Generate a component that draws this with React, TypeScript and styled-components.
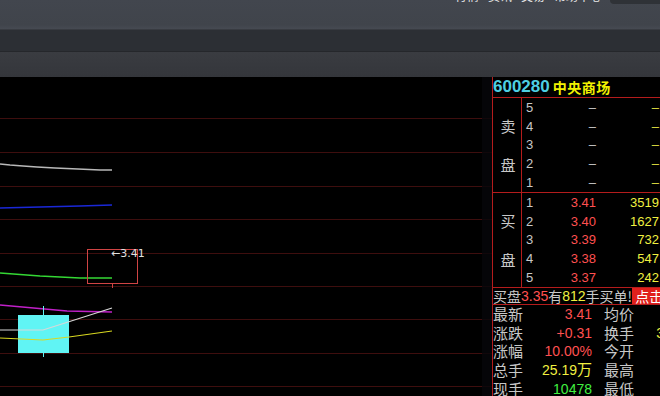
import React from 'react';
import styled, { createGlobalStyle } from 'styled-components';

const GlobalStyle = createGlobalStyle`
	html, body {
		margin: 0;
		padding: 0;
		background: #000;
		overflow: hidden;
	}
	* {
		box-sizing: border-box;
	}
`;

const RED_LINE = '#b41c1c';
const GRAY = '#c8c8c8';
const PRICE_RED = '#ff5050';
const VOL_YELLOW = '#f0f040';
const NUM_FONT = `'Liberation Sans', Arial, sans-serif`;
const CJK_FONT = `'Noto Sans CJK SC', sans-serif`;

const Page = styled.div`
	width: 660px;
	height: 396px;
	display: flex;
	flex-direction: column;
	overflow: hidden;
	background: #000;
	font-family: ${NUM_FONT};
`;

const TopBar = styled.div`
	height: 30px;
	flex: none;
	display: flex;
	align-items: flex-start;
	justify-content: flex-end;
	background: linear-gradient(#42464e, #40444b 85%, #464a52);
	border-bottom: 1px solid #383b41;
	overflow: hidden;
`;

const TopMenu = styled.div`
	display: flex;
	gap: 9px;
	margin-top: -12px;
	margin-right: 8px;
	color: #e8e8e8;
	font-size: 12px;
	line-height: 15px;
	font-family: ${CJK_FONT};
`;

const SearchBox = styled.div`
	width: 50px;
	height: 4px;
	background: #2f3237;
	border-radius: 0 0 0 4px;
`;

const TabBar = styled.div`
	height: 22px;
	flex: none;
	background: #2c2f34;
	border-bottom: 1px solid #25272b;
`;

const ToolBar = styled.div`
	height: 25px;
	flex: none;
	background: linear-gradient(#3a3c41, #34363b);
`;

const Main = styled.div`
	flex: 1;
	display: flex;
	min-height: 0;
`;

const ChartArea = styled.div`
	width: 492px;
	flex: none;
	height: 100%;
`;

const Panel = styled.div`
	flex: 1;
	border-left: 1px solid ${RED_LINE};
	display: flex;
	flex-direction: column;
	overflow: hidden;
	white-space: nowrap;
`;

const Header = styled.div`
	height: 21px;
	flex: none;
	display: flex;
	align-items: center;
	gap: 3px;
	border-bottom: 1px solid ${RED_LINE};
`;

const Code = styled.span`
	color: #4ecfe2;
	font-size: 17px;
	font-weight: bold;
	font-family: ${NUM_FONT};
`;

const Name = styled.span`
	color: #f2f200;
	font-size: 14px;
	font-weight: bold;
	letter-spacing: 0.5px;
	font-family: ${CJK_FONT};
`;

const Book = styled.div`
	flex: none;
	display: flex;
	border-bottom: 1px solid ${RED_LINE};
`;

const Side = styled.div`
	width: 29px;
	flex: none;
	border-right: 1px solid ${RED_LINE};
	display: flex;
	flex-direction: column;
	align-items: center;
	justify-content: space-evenly;
	color: ${GRAY};
	font-size: 15px;
	font-family: ${CJK_FONT};
	padding-left: 2px;
`;

const Rows = styled.div`
	flex: 1;
	display: flex;
	flex-direction: column;
`;

const Level = styled.div`
	height: 18.8px;
	flex: none;
	display: grid;
	grid-template-columns: 14px 56px 63px;
	align-items: center;
	padding-left: 4px;
	font-size: 13px;
	font-family: ${NUM_FONT};
`;

const Num = styled.span<{ $color?: string }>`
	color: ${(p) => p.$color || GRAY};
	text-align: right;
	&:first-child {
		text-align: left;
	}
`;

const Notice = styled.div`
	height: 17px;
	flex: none;
	display: flex;
	align-items: center;
	border-bottom: 1px solid ${RED_LINE};
	font-size: 14px;
	line-height: 16px;
	font-family: ${CJK_FONT};
	color: ${GRAY};
`;

const Hi = styled.span<{ $color: string }>`
	color: ${(p) => p.$color};
	font-family: ${NUM_FONT};
	font-size: 14px;
`;

const ClickTag = styled.span`
	margin-left: auto;
	background: #e0201c;
	color: #fff;
	padding: 0 2px 0 3px;
	height: 16px;
	line-height: 16px;
`;

const Stats = styled.div`
	display: flex;
	flex-direction: column;
`;

const StatRow = styled.div`
	height: 18.6px;
	flex: none;
	display: grid;
	grid-template-columns: 30px 69px 12px 40px 20px;
	grid-template-rows: 18.6px;
	align-items: center;
`;

const Label = styled.span`
	color: ${GRAY};
	font-size: 15px;
	font-family: ${CJK_FONT};
	line-height: 18px;
	height: 18px;
`;

const Value = styled.span<{ $color: string }>`
	color: ${(p) => p.$color};
	text-align: right;
	font-size: 14px;
	font-family: ${NUM_FONT};
	line-height: 18px;
	height: 18px;
`;

const Wan = styled.span`
	font-family: ${CJK_FONT};
	font-size: 15px;
	line-height: 1;
`;

const gridYs = [41, 75, 109, 142, 176, 209, 242, 276, 309];

const Chart: React.FC = () => (
	<svg width="492" height="319" viewBox="0 0 492 319">
		<rect x="0" y="0" width="492" height="319" fill="#000" />
		{gridYs.map((y) => (
			<line key={y} x1="0" x2="492" y1={y + 0.5} y2={y + 0.5} stroke="#3e0e0e" strokeWidth="1" />
		))}
		<rect x="482" y="0" width="10" height="319" fill="#06060a" opacity="0.8" />
		<polyline
			points="0,87 10,88 23,89 37,90 55,91 78,92 100,93 112,93"
			fill="none"
			stroke="#b8b8b8"
			strokeWidth="1.5"
		/>
		<polyline points="0,131 40,130 80,129 112,128" fill="none" stroke="#1a28d8" strokeWidth="1.6" />
		<polyline points="0,196 40,199 80,201 112,201" fill="none" stroke="#34d834" strokeWidth="1.3" />
		<rect x="87.5" y="172.5" width="50" height="34" fill="none" stroke="#d04444" strokeWidth="1" />
		<line x1="112.5" x2="112.5" y1="207" y2="211" stroke="#d04444" />
		<text x="111" y="180" fill="#e0e0e0" fontSize="11" fontFamily="'DejaVu Sans', sans-serif">
			←3.41
		</text>
		<polyline points="0,228 67,234 112,235" fill="none" stroke="#c020c8" strokeWidth="1.3" />
		<line x1="43.5" x2="43.5" y1="229" y2="280" stroke="#60f4f4" />
		<rect x="18" y="238" width="51" height="38" fill="#60f4f4" />
		<polyline points="0,253 43,253 112,231" fill="none" stroke="#d8d8d8" strokeWidth="1.2" />
		<polyline points="0,261 43,263 69,260 112,254" fill="none" stroke="#d8d820" strokeWidth="1.2" />
	</svg>
);

const sells = ['5', '4', '3', '2', '1'];
const buys = [
	{ n: '1', p: '3.41', v: '3519' },
	{ n: '2', p: '3.40', v: '1627' },
	{ n: '3', p: '3.39', v: '732' },
	{ n: '4', p: '3.38', v: '547' },
	{ n: '5', p: '3.37', v: '242' },
];

const stats = [
	{ a: '最新', v: '3.41', c: PRICE_RED, b: '均价' },
	{ a: '涨跌', v: '+0.31', c: PRICE_RED, b: '换手', extra: '3' },
	{ a: '涨幅', v: '10.00%', c: PRICE_RED, b: '今开' },
	{ a: '总手', v: '25.19', c: VOL_YELLOW, b: '最高', wan: true },
	{ a: '现手', v: '10478', c: '#40f040', b: '最低' },
];

export default function App() {
	return (
		<>
			<GlobalStyle />
			<Page>
				<TopBar>
					<TopMenu>
						<span>行情</span>
						<span>资讯</span>
						<span>交易</span>
						<span>帮助中心</span>
					</TopMenu>
					<SearchBox />
				</TopBar>
				<TabBar />
				<ToolBar />
				<Main>
					<ChartArea>
						<Chart />
					</ChartArea>
					<Panel>
						<Header>
							<Code>600280</Code>
							<Name>中央商场</Name>
						</Header>
						<Book>
							<Side>
								<span>卖</span>
								<span>盘</span>
							</Side>
							<Rows>
								{sells.map((n) => (
									<Level key={n}>
										<Num>{n}</Num>
										<Num>–</Num>
										<Num $color="#e0e040">–</Num>
									</Level>
								))}
							</Rows>
						</Book>
						<Book>
							<Side>
								<span>买</span>
								<span>盘</span>
							</Side>
							<Rows>
								{buys.map((b) => (
									<Level key={b.n}>
										<Num>{b.n}</Num>
										<Num $color={PRICE_RED}>{b.p}</Num>
										<Num $color={VOL_YELLOW}>{b.v}</Num>
									</Level>
								))}
							</Rows>
						</Book>
						<Notice>
							买盘<Hi $color={PRICE_RED}>3.35</Hi>有<Hi $color={VOL_YELLOW}>812</Hi>手买单!
							<ClickTag>点击</ClickTag>
						</Notice>
						<Stats>
							{stats.map((s) => (
								<StatRow key={s.a}>
									<Label>{s.a}</Label>
									<Value $color={s.c}>
										{s.v}
										{s.wan && <Wan>万</Wan>}
									</Value>
									<span />
									<Label>{s.b}</Label>
									{s.extra ? <Value $color={VOL_YELLOW}>{s.extra}</Value> : <span />}
								</StatRow>
							))}
						</Stats>
					</Panel>
				</Main>
			</Page>
		</>
	);
}
